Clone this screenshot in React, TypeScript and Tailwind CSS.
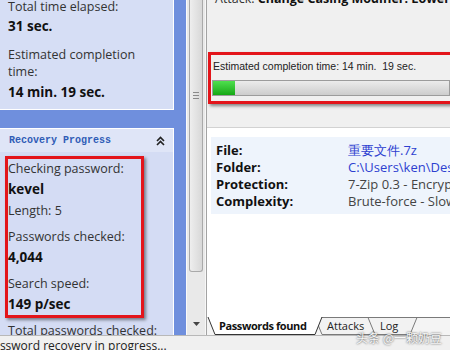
export default function App() {
  return (
    <div className="relative flex h-[350px] w-[450px] flex-col overflow-hidden bg-[#f0f0f0] font-['Open_Sans',sans-serif] text-[12.5px] text-[#333]">
      <div className="flex h-[335px]">
        {/* task pane */}
        <div className="flex w-[186px] shrink-0 flex-col gap-[18px] overflow-hidden bg-[#6f8fdd]">
          <div className="-mt-[2px] w-[174px] border-b border-r border-white bg-[#d6def5] pb-[8px] pl-[8px] leading-[17px]">
            <div>Total time elapsed:</div>
            <div className="mt-[3px] text-[13.5px] font-bold text-[#111]">31 sec.</div>
            <div className="mt-[11px]">Estimated completion</div>
            <div>time:</div>
            <div className="mt-[4px] text-[13.5px] font-bold text-[#111]">14 min. 19 sec.</div>
          </div>

          <div className="w-[174px] flex-1 border-r border-t border-white bg-[#d4dcf4]">
            <div className="flex h-[23px] items-center justify-between bg-[#dfe5f7] pl-[9px] pr-[8px]">
              <span className="font-['Liberation_Mono',monospace] text-[10px] font-bold text-[#2f5cb6]">
                Recovery Progress
              </span>
              <svg width="9" height="10" viewBox="0 0 9 10">
                <polyline points="1,5 4.5,1.5 8,5" fill="none" stroke="#222" strokeWidth="1.6" />
                <polyline points="1,9 4.5,5.5 8,9" fill="none" stroke="#222" strokeWidth="1.6" />
              </svg>
            </div>
            <div className="pl-[8px] pt-[6px] leading-[21px] whitespace-nowrap">
              <div>Checking password:</div>
              <div className="text-[13.5px] font-bold text-[#111]">kevel</div>
              <div>Length: 5</div>
              <div className="mt-[5px]">Passwords checked:</div>
              <div className="text-[13.5px] font-bold text-[#111]">4,044</div>
              <div className="mt-[5px]">Search speed:</div>
              <div className="text-[13.5px] font-bold text-[#111]">149 p/sec</div>
              <div className="mt-[5px]">Total passwords checked:</div>
            </div>
          </div>
        </div>

        {/* scrollbar */}
        <div className="flex w-[19px] shrink-0 flex-col items-center border-l border-[#fafafa] bg-[#e9e9e9]">
          <div className="flex h-[272px] w-[14px] flex-col items-center rounded-b-[3px] border border-t-0 border-[#a9a9a9] bg-gradient-to-r from-[#eeeeee] to-[#d8d8d8]">
            <div className="mt-[92px] flex w-[6px] flex-col gap-[2px]">
              <div className="h-px bg-[#8a8a8a]" />
              <div className="h-px bg-[#8a8a8a]" />
              <div className="h-px bg-[#8a8a8a]" />
            </div>
          </div>
          <svg className="mb-[9px] mt-auto" width="7" height="4" viewBox="0 0 7 4">
            <polygon points="0,0 7,0 3.5,4" fill="#444" />
          </svg>
        </div>
        <div className="w-[2px] shrink-0 border-r border-[#a3a3a3] bg-[#f7f7f7]" />

        {/* main */}
        <div className="flex min-w-0 flex-1 flex-col overflow-hidden">
          <div className="h-[128px] shrink-0 border-b border-[#d2d2d2] bg-[#f0f0f0]">
            <div className="-mt-[10px] whitespace-nowrap pl-[8px] leading-[17px]">
              Attack: <span className="font-bold text-[#111]">Change Casing Modifier: Lower-case</span>
            </div>
            <div className="mt-[52px] whitespace-nowrap pl-[6px] font-['Liberation_Sans',sans-serif] text-[10.5px] leading-[14px] text-[#222]">
              Estimated completion time: 14 min.&nbsp; 19 sec.
            </div>
            <div className="ml-[5px] mt-[7px] h-[16px] border border-[#9c9c9c] bg-gradient-to-b from-[#ececec] to-[#cdcdcd]">
              <div className="h-full w-[22px] bg-gradient-to-b from-[#4ee04e] to-[#12a812]" />
            </div>
          </div>

          <div className="flex-1 bg-white pl-[4px] pt-[9px]">
            <div className="grid grid-cols-[132px_1fr] whitespace-nowrap bg-[#eef4fc] pb-[4px] pl-[5px] pt-[5px] text-[13px] leading-[17px]">
              <span className="font-bold text-[#111]">File:</span>
              <span className="text-[#2d3fd0]">重要文件.7z</span>
              <span className="font-bold text-[#111]">Folder:</span>
              <span className="text-[#2d3fd0]">C:\Users\ken\Desktop</span>
              <span className="font-bold text-[#111]">Protection:</span>
              <span className="text-[#444]">7-Zip 0.3 - Encryption</span>
              <span className="font-bold text-[#111]">Complexity:</span>
              <span className="text-[#444]">Brute-force - Slow</span>
            </div>
          </div>

          {/* sheet tabs */}
          <div className="relative h-[18px] shrink-0 bg-[#f4f4f4]">
            <svg className="absolute inset-0" width="243" height="18" viewBox="0 0 243 18">
              <line x1="115" y1="0.5" x2="243" y2="0.5" stroke="#7a7a7a" />
              <polygon points="108,0.5 115,17.5 165,17.5 172,0.5" fill="#f2f2f2" stroke="#7a7a7a" />
              <polygon points="161,0.5 168,17.5 203,17.5 210,0.5" fill="#f2f2f2" stroke="#7a7a7a" />
              <polygon points="1,0 8,17.5 108,17.5 115,0" fill="#ffffff" />
              <polyline points="1,0 8,17.5 108,17.5 115,0" fill="none" stroke="#333" />
            </svg>
            <div className="relative flex h-full items-center whitespace-nowrap text-[11px] leading-[14px] text-[#222]">
              <span className="w-[113px] pl-[12px] font-bold tracking-[-0.4px] text-[#111]">Passwords found</span>
              <span className="w-[53px] pl-[7px]">Attacks</span>
              <span className="pl-[7px]">Log</span>
            </div>
          </div>
        </div>
      </div>

      {/* status bar */}
      <div className="h-[15px] shrink-0 overflow-hidden whitespace-nowrap border-t border-[#b8b8b8] bg-[#f0f0f0] text-[12px] leading-[19px] text-[#222]">
        <div className="-ml-[14px]">Password recovery in progress...</div>
      </div>

      {/* annotations */}
      <div className="absolute left-[5px] top-[156px] h-[162px] w-[139px] border-[3px] border-[#e3151b] shadow-[2px_2px_3px_rgba(0,0,0,0.45)]" />
      <div className="absolute left-[208px] top-[52px] h-[52px] w-[250px] border-[3px] border-[#e3151b] shadow-[2px_2px_3px_rgba(0,0,0,0.45)]" />
      <div className="absolute left-[356px] top-[331px] whitespace-nowrap font-['Noto_Sans_CJK_SC',sans-serif] text-[12px] leading-[14px] text-[#f6f6f6] [text-shadow:0_0_2px_#333]">
        头条 @一颗奶豆
      </div>
    </div>
  );
}
